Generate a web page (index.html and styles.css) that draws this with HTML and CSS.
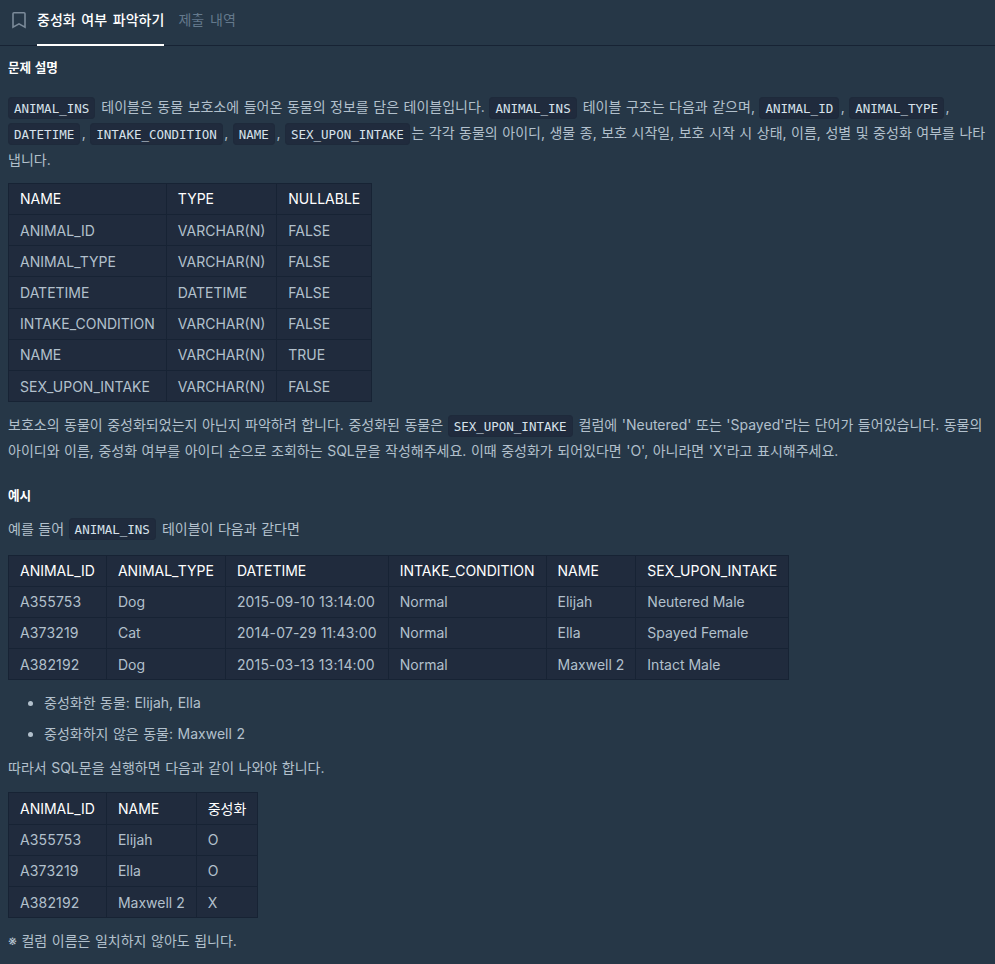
FILE: index.html
```html
<!DOCTYPE html>
<html lang="ko">
<head>
   <meta charset="utf-8">
   <title>중성화 여부 파악하기</title>
   <link rel="stylesheet" href="styles.css">
</head>
<body>

<div class="tabs">
   <svg class="bookmark" width="16" height="18" viewBox="0 0 16 18" fill="none" stroke="#7b8a99" stroke-width="1.6"><path d="M2 1.8c0-.6.4-1 1-1h10c.6 0 1 .4 1 1v13.4l-6-3.4-6 3.4z"/></svg>
   <a class="tab active">중성화 여부 파악하기</a>
   <a class="tab">제출 내역</a>
</div>

<div class="content">
   <h6>문제 설명</h6>

   <p><code>ANIMAL_INS</code> 테이블은 동물 보호소에 들어온 동물의 정보를 담은 테이블입니다. <code>ANIMAL_INS</code> 테이블 구조는 다음과 같으며, <code>ANIMAL_ID</code>, <code>ANIMAL_TYPE</code>, <code>DATETIME</code>, <code>INTAKE_CONDITION</code>, <code>NAME</code>, <code>SEX_UPON_INTAKE</code>는 각각 동물의 아이디, 생물 종, 보호 시작일, 보호 시작 시 상태, 이름, 성별 및 중성화 여부를 나타냅니다.</p>

   <table>
      <tr><th>NAME</th><th>TYPE</th><th>NULLABLE</th></tr>
      <tr><td>ANIMAL_ID</td><td>VARCHAR(N)</td><td>FALSE</td></tr>
      <tr><td>ANIMAL_TYPE</td><td>VARCHAR(N)</td><td>FALSE</td></tr>
      <tr><td>DATETIME</td><td>DATETIME</td><td>FALSE</td></tr>
      <tr><td>INTAKE_CONDITION</td><td>VARCHAR(N)</td><td>FALSE</td></tr>
      <tr><td>NAME</td><td>VARCHAR(N)</td><td>TRUE</td></tr>
      <tr><td>SEX_UPON_INTAKE</td><td>VARCHAR(N)</td><td>FALSE</td></tr>
   </table>

   <p>보호소의 동물이 중성화되었는지 아닌지 파악하려 합니다. 중성화된 동물은 <code>SEX_UPON_INTAKE</code> 컬럼에 'Neutered' 또는 'Spayed'라는 단어가 들어있습니다. 동물의 아이디와 이름, 중성화 여부를 아이디 순으로 조회하는 SQL문을 작성해주세요. 이때 중성화가 되어있다면 'O', 아니라면 'X'라고 표시해주세요.</p>

   <h6>예시</h6>

   <p class="before-table">예를 들어 <code>ANIMAL_INS</code> 테이블이 다음과 같다면</p>

   <table>
      <tr><th>ANIMAL_ID</th><th>ANIMAL_TYPE</th><th>DATETIME</th><th>INTAKE_CONDITION</th><th>NAME</th><th>SEX_UPON_INTAKE</th></tr>
      <tr><td class="num">A355753</td><td>Dog</td><td class="num">2015-09-10 13:14:00</td><td>Normal</td><td>Elijah</td><td>Neutered Male</td></tr>
      <tr><td class="num">A373219</td><td>Cat</td><td class="num">2014-07-29 11:43:00</td><td>Normal</td><td>Ella</td><td>Spayed Female</td></tr>
      <tr><td class="num">A382192</td><td>Dog</td><td class="num">2015-03-13 13:14:00</td><td>Normal</td><td>Maxwell 2</td><td>Intact Male</td></tr>
   </table>

   <ul>
      <li>중성화한 동물: Elijah, Ella</li>
      <li>중성화하지 않은 동물: Maxwell 2</li>
   </ul>

   <p class="before-table">따라서 SQL문을 실행하면 다음과 같이 나와야 합니다.</p>

   <table>
      <tr><th>ANIMAL_ID</th><th>NAME</th><th>중성화</th></tr>
      <tr><td class="num">A355753</td><td>Elijah</td><td>O</td></tr>
      <tr><td class="num">A373219</td><td>Ella</td><td>O</td></tr>
      <tr><td class="num">A382192</td><td>Maxwell 2</td><td>X</td></tr>
   </table>

   <p>※ 컬럼 이름은 일치하지 않아도 됩니다.</p>
</div>

</body>
</html>
```

FILE: styles.css
```css
html, body {
   height: 100%;
}

body {
   margin: 0;
   background-color: #263747;
   color: #b2c0cc;
   font-family: Inter, "Noto Sans CJK KR", sans-serif;
   font-size: 14px;
   line-height: 25.2px;
   word-spacing: 0.6px;
   overflow: hidden;
}

.tabs {
   display: flex;
   align-items: flex-start;
   height: 45px;
   padding-left: 11px;
   border-bottom: 1px solid #172334;
}

.bookmark {
   margin: 12px 10px 0 0;
}

.tab {
   height: 44px;
   padding: 7px 0 0 0;
   margin-right: 14px;
   box-sizing: border-box;
   color: #64798c;
   font-size: 14px;
   word-spacing: 2px;
}

.tab.active {
   height: 46px;
   color: #ffffff;
   font-weight: 500;
   border-bottom: 2px solid #ffffff;
}

.content {
   padding: 9px 8px 0 8px;
}

h6 {
   margin: 19px 0 8px 0;
   color: #ffffff;
   font-size: 12.6px;
   font-weight: 700;
}

h6:first-child {
   margin: 0 0 14px 0;
}

p {
   margin: 0 0 11px 0;
}

p.before-table {
   margin-bottom: 12.5px;
}

code {
   padding: 2.5px 5px;
   margin-right: 1.5px;
   background-color: #202b3d;
   border: 1px solid #1e2a3b;
   border-radius: 4px;
   color: #d7e2eb;
   font-family: "DejaVu Sans Mono", monospace;
   font-size: 12.5px;
   word-spacing: 0;
}

table {
   margin: 0 0 10px 0;
   border-collapse: collapse;
   background-color: #202b3d;
}

th, td {
   padding: 2.5px 11px;
   border: 1px solid #172334;
   font-weight: 400;
   text-align: left;
   white-space: nowrap;
   word-spacing: 0;
}

th {
   color: #ffffff;
}

td.num {
   letter-spacing: 0.15px;
}

ul {
   margin: 0 0 9px 0;
   padding-left: 36px;
}

li {
   margin-bottom: 5px;
}
```
